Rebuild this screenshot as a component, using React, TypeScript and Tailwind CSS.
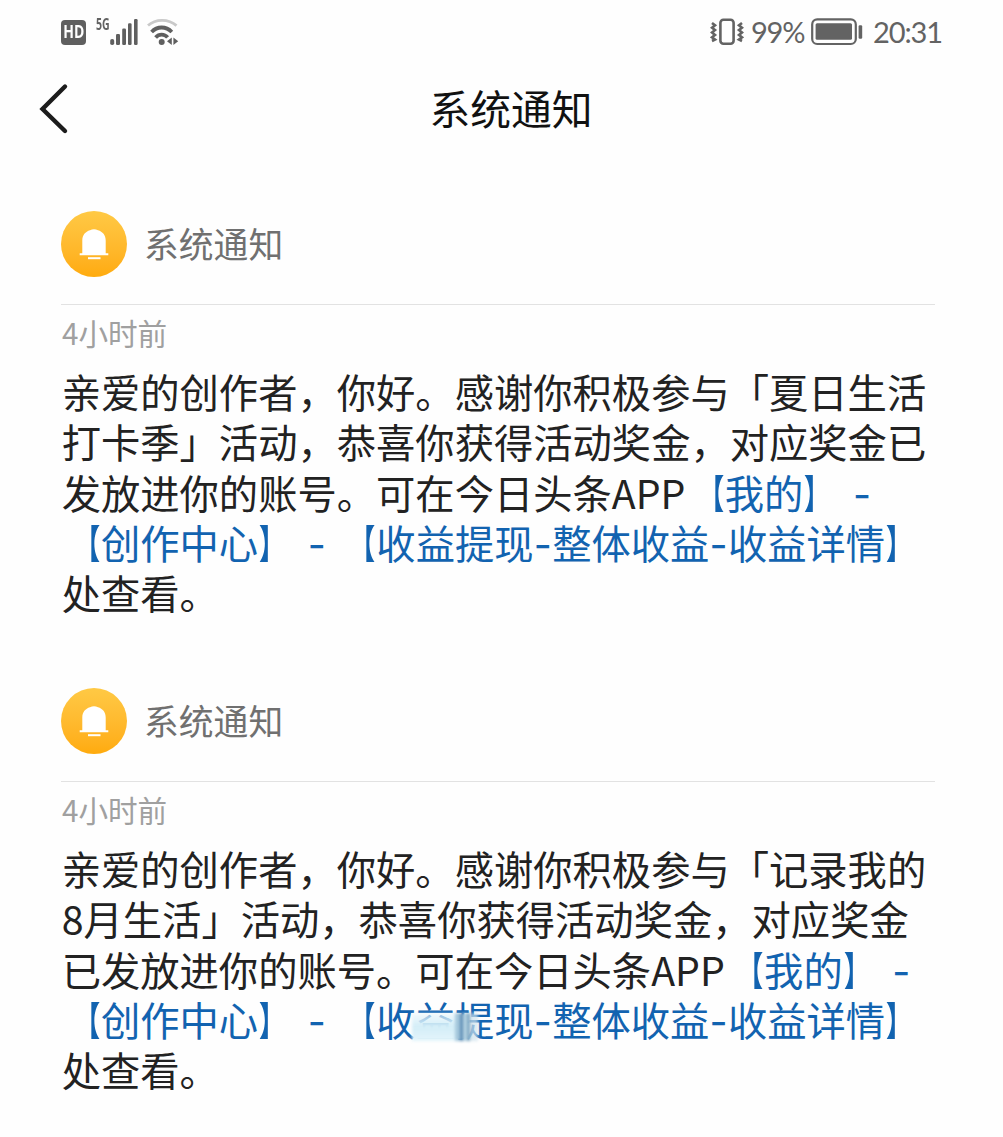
import type { ReactNode } from "react";

import { clsx } from "clsx";

// --- Constants ---
const TIME_LABEL = "4小时前";
const SENDER = "系统通知";

const MESSAGES = [
  {
    id: 1,
    lines: [
      "亲爱的创作者，你好。感谢你积极参与「夏日生活",
      "打卡季」活动，恭喜你获得活动奖金，对应奖金已",
      "发放进你的账号。可在今日头条APP",
    ],
    smudged: false,
  },
  {
    id: 2,
    lines: [
      "亲爱的创作者，你好。感谢你积极参与「记录我的",
      "8月生活」活动，恭喜你获得活动奖金，对应奖金",
      "已发放进你的账号。可在今日头条APP",
    ],
    smudged: true,
  },
];

// --- Icons ---

const SignalIcon = () => (
  <svg width="28" height="28" viewBox="0 0 28 28" fill="#5f5f5f">
    <rect x="0.2" y="21" width="4" height="6" rx="1.8" />
    <rect x="6" y="16" width="4" height="11" rx="1.2" />
    <rect x="12.2" y="10.6" width="3.8" height="16.4" rx="1.2" />
    <rect x="18" y="5.3" width="3.6" height="21.7" rx="1.2" />
    <rect x="24" y="1" width="3.6" height="26" rx="1.2" />
  </svg>
);

const WifiIcon = () => (
  <svg width="32" height="28" viewBox="0 0 32 28" fill="none">
    <path
      d="M1 7.6C8.5 0.6 21.5 0.6 29.5 7.6"
      stroke="#c9c9c9"
      strokeWidth="2.8"
    />
    <path
      d="M4.6 14C10.2 8 19 8 24.8 14"
      stroke="#5f5f5f"
      strokeWidth="3.8"
    />
    <path
      d="M8.6 19.4C12 15.6 17.4 15.6 20.6 19.4"
      stroke="#5f5f5f"
      strokeWidth="3.8"
    />
    <circle cx="14.7" cy="24" r="3" fill="#5f5f5f" />
    <path d="M24.8 19.6v7.4l-4.8-3.7zM26.4 19.6v7.4l4.8-3.7z" fill="#5f5f5f" />
  </svg>
);

const VibrateIcon = () => (
  <svg
    width="34"
    height="28"
    viewBox="0 0 34 28"
    fill="none"
    stroke="#636363"
    strokeWidth="2.6"
  >
    <rect x="10.4" y="1.8" width="13.2" height="24" rx="3" />
    <path d="M2 5l3 2.3-3 2.4 3 2.4-3 2.4 3 2.4-3 2.4 3 2.2-3 1.5" />
    <path d="M32 5l-3 2.3 3 2.4-3 2.4 3 2.4-3 2.4 3 2.4-3 2.2 3 1.5" />
  </svg>
);

const BatteryIcon = () => (
  <svg width="52" height="28" viewBox="0 0 52 28" fill="none">
    <rect
      x="1.2"
      y="1.4"
      width="43.6"
      height="24.6"
      rx="5"
      stroke="#636363"
      strokeWidth="2.2"
    />
    <rect x="4.6" y="5.2" width="36.4" height="16.6" rx="1.5" fill="#636363" />
    <rect x="47.6" y="7.2" width="3.6" height="13.6" rx="1.2" fill="#636363" />
  </svg>
);

const BellIcon = () => (
  <svg width="32" height="34" viewBox="0 0 32 34" fill="#fff">
    <path d="M12 3.2q4-2 8 0c4.6 1.4 7.7 4.8 7.7 10.3v12.7h2.6v2H1.7v-2h2.6V13.5C4.3 8 7.4 4.6 12 3.2z" />
    <rect x="10" y="30.2" width="12.5" height="2" />
  </svg>
);

// --- Sub-components ---

const StatusBar = () => (
  <div className="flex h-16 items-center justify-between px-[61px] text-[#636363]">
    <div className="flex items-center">
      <span className="flex h-[25px] w-[25px] items-center justify-center rounded bg-[#5f5f5f] font-['Open_Sans',sans-serif] text-[17px] font-bold text-white">
        <span className="scale-x-[0.82]">HD</span>
      </span>
      <span className="ml-[10px] h-7 w-[14px] font-['Open_Sans',sans-serif] text-[16px] leading-[13px] font-bold">
        <span className="inline-block origin-left scale-x-[0.66]">5G</span>
      </span>
      <SignalIcon />
      <span className="ml-[9px]">
        <WifiIcon />
      </span>
    </div>
    <div className="flex items-center font-['Lato',sans-serif] text-[29px] leading-7">
      <VibrateIcon />
      <span className="ml-[7px] w-[60px] tracking-[-1.2px]">99%</span>
      <BatteryIcon />
      <span className="ml-[10px] w-[69px] tracking-[-1.1px]">20:31</span>
    </div>
  </div>
);

const TitleBar = () => (
  <header className="relative flex h-[90px] items-center justify-center pb-[2px] pl-[19px]">
    <button className="absolute top-[18px] left-[38px]" aria-label="返回">
      <svg
        width="32"
        height="54"
        viewBox="0 0 32 54"
        fill="none"
        stroke="#1c1c1c"
        strokeWidth="4.4"
        strokeLinecap="round"
      >
        <path d="M27 4.5L4.5 27 27 49" />
      </svg>
    </button>
    <h1 className="text-[40.8px] text-[#111]">{SENDER}</h1>
  </header>
);

const Dash = () => (
  <span className="inline-block w-[18.6px] text-center font-['Inter',sans-serif] leading-none">
    -
  </span>
);

const Gap = () => (
  <span className="mr-[11px] ml-[10px]">
    <Dash />
  </span>
);

// Lenticular brackets are drawn narrower than the full-width glyphs
const Bracketed = ({ children }: { children: ReactNode }) => (
  <>
    <span className="inline-block origin-[92%_50%] scale-x-[0.66] leading-none font-bold">
      【
    </span>
    {children}
    <span className="inline-block origin-[8%_50%] scale-x-[0.66] leading-none font-bold">
      】
    </span>
  </>
);

const Smudge = () => (
  <span className="absolute top-[23px] -left-[4px] flex h-[28px] w-[66px] overflow-hidden blur-[1.5px]">
    <span className="h-full w-[43px] bg-linear-to-b from-[#e9f7fc]/60 via-[#d3edf7] to-[#e4f5fb]" />
    <span className="h-full w-[5px] bg-[#a5c8dc]" />
    <span className="h-full w-[3px] bg-[#5e8db4]" />
    <span className="h-full w-[4px] bg-[#b5d3e2]" />
    <span className="h-full w-[3px] bg-[#7ea7c2]" />
    <span className="h-full w-[8px] bg-[#cfe3ec]/70" />
  </span>
);

const Notice = ({ lines, smudged }: { lines: string[]; smudged: boolean }) => (
  <article className="h-[477px] pr-[68px] pl-[61px]">
    <div className="flex h-[94px] items-start border-b border-[#e2e2e2]">
      <div className="flex h-[66px] w-[66px] items-center justify-center rounded-full bg-linear-to-b from-[#ffc944] to-[#ffab0c]">
        <BellIcon />
      </div>
      <span className="ml-[17px] text-[34.8px] leading-[65px] text-[#707070]">
        {SENDER}
      </span>
    </div>
    <p className="h-[61px] pl-px text-[29.6px] leading-[56px] text-[#a0a0a0]">
      {TIME_LABEL}
    </p>
    <div className="pl-[0.7px] text-[39.3px] leading-[50.3px] whitespace-nowrap text-[#222]">
      <p>{lines[0]}</p>
      <p>{lines[1]}</p>
      <p>
        {lines[2]}
        <span className="text-[#1263b0]">
          <Bracketed>我的</Bracketed>
          <Gap />
        </span>
      </p>
      <p className="text-[#1263b0]">
        <Bracketed>创作中心</Bracketed>
        <Gap />
        <Bracketed>
          收
          <span className={clsx(smudged && "relative")}>
            益提
            {smudged && <Smudge />}
          </span>
          现
          <Dash />
          整体收益
          <Dash />
          收益详情
        </Bracketed>
      </p>
      <p>处查看。</p>
    </div>
  </article>
);

export default function App() {
  return (
    <main
      lang="zh-CN"
      className="h-[1137px] w-[1003px] overflow-hidden bg-[#fefefe] font-['Noto_Sans_CJK_SC',sans-serif]"
    >
      <StatusBar />
      <TitleBar />
      <div className="pt-[57px]">
        {MESSAGES.map((message) => (
          <Notice
            key={message.id}
            lines={message.lines}
            smudged={message.smudged}
          />
        ))}
      </div>
    </main>
  );
}
